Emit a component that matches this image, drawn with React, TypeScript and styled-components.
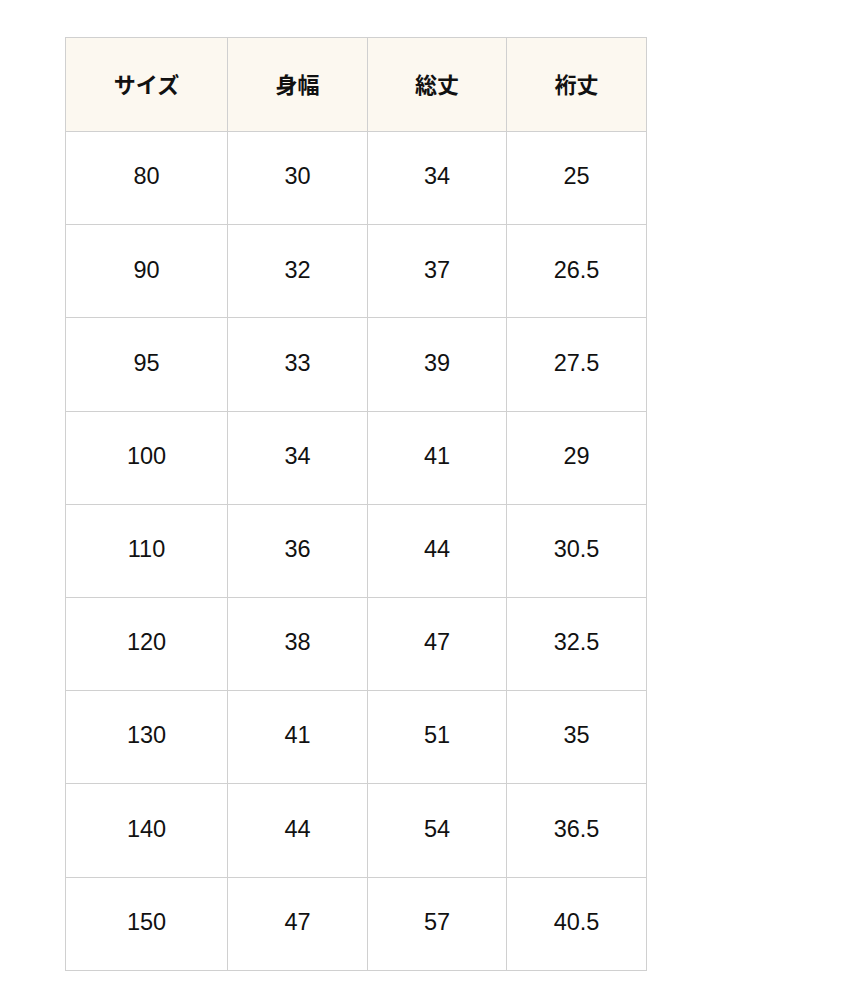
import React from "react";
import styled, { createGlobalStyle } from "styled-components";

const GlobalStyle = createGlobalStyle`
  body {
    margin: 0;
    background: #fff;
    font-family: "Liberation Sans", "Noto Sans CJK JP", sans-serif;
    color: #111;
  }
`;

const Page = styled.div`
  padding: 37px 0 0 65px;
`;

const SizeTable = styled.table`
  border-collapse: collapse;
  table-layout: fixed;
  border: 1px solid #d0d0d0;
`;

const HeadCell = styled.th<{ $w: number }>`
  width: ${(p) => p.$w}px;
  height: 89px;
  padding: 0 0 4px;
  background: #fcf8f0;
  border: 1px solid #d0d0d0;
  font-family: "Noto Sans CJK JP", sans-serif;
  font-size: 22px;
  line-height: 1;
  font-weight: 700;
  text-align: center;
  vertical-align: middle;
`;

const Cell = styled.td`
  height: 90.2px;
  padding: 0 0 2px;
  border: 1px solid #d0d0d0;
  font-size: 23.5px;
  line-height: 1;
  font-weight: 400;
  text-align: center;
  vertical-align: middle;
`;

const headers: [string, number][] = [
  ["サイズ", 161],
  ["身幅", 139],
  ["総丈", 138],
  ["裄丈", 139],
];

const rows = [
  ["80", "30", "34", "25"],
  ["90", "32", "37", "26.5"],
  ["95", "33", "39", "27.5"],
  ["100", "34", "41", "29"],
  ["110", "36", "44", "30.5"],
  ["120", "38", "47", "32.5"],
  ["130", "41", "51", "35"],
  ["140", "44", "54", "36.5"],
  ["150", "47", "57", "40.5"],
];

const App: React.FC = () => {
  return (
    <>
      <GlobalStyle />
      <Page>
        <SizeTable>
          <thead>
            <tr>
              {headers.map(([label, w]) => (
                <HeadCell key={label} $w={w}>
                  {label}
                </HeadCell>
              ))}
            </tr>
          </thead>
          <tbody>
            {rows.map((row) => (
              <tr key={row[0]}>
                {row.map((v, i) => (
                  <Cell key={i}>{v}</Cell>
                ))}
              </tr>
            ))}
          </tbody>
        </SizeTable>
      </Page>
    </>
  );
};

export default App;
